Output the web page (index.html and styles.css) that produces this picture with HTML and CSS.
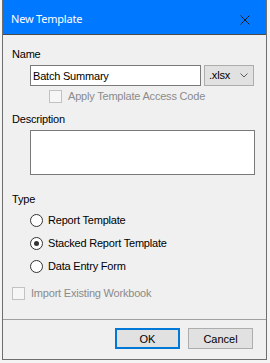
FILE: index.html
```html
<!DOCTYPE html>
<html lang="en">
<head>
  <meta charset="UTF-8">
  <title>New Template</title>
  <link rel="stylesheet" href="styles.css">
</head>
<body>

  <div class="window">
    <div class="titlebar">
      <span class="title">New Template</span>
      <svg class="close" width="10" height="10" viewBox="0 0 10 10">
        <path d="M0.5 0.5L9.5 9.5M9.5 0.5L0.5 9.5" stroke="#1e1e1e" stroke-width="1" fill="none"/>
      </svg>
    </div>

    <div class="content">
      <div class="label">Name</div>
      <div class="name-row">
        <input class="textbox" type="text" value="Batch Summary">
        <div class="combo">
          <span>.xlsx</span>
          <svg width="8" height="5" viewBox="0 0 8 5">
            <path d="M0.5 0.5L4 4L7.5 0.5" stroke="#5a5a5a" stroke-width="1" fill="none"/>
          </svg>
        </div>
      </div>
      <div class="check-row indent disabled">
        <span class="checkbox"></span>
        <span>Apply Template Access Code</span>
      </div>

      <div class="label desc-label">Description</div>
      <textarea class="memo"></textarea>

      <div class="label type-label">Type</div>
      <div class="radios">
        <div class="radio-row"><span class="radio"></span><span>Report Template</span></div>
        <div class="radio-row"><span class="radio checked"></span><span>Stacked Report Template</span></div>
        <div class="radio-row"><span class="radio"></span><span>Data Entry Form</span></div>
      </div>

      <div class="check-row import disabled">
        <span class="checkbox"></span>
        <span>Import Existing Workbook</span>
      </div>
    </div>

    <div class="footer">
      <button class="btn default">OK</button>
      <button class="btn">Cancel</button>
    </div>
  </div>

</body>
</html>
```

FILE: styles.css
```css
* {
  box-sizing: border-box;
}

body {
  margin: 0;
  background-color: #f4f4f4;
  color: #000;
  font-family: "Liberation Sans", Arial, sans-serif;
  font-size: 11px;
  letter-spacing: -0.2px;
}

.window {
  margin-left: 2px;
  width: 265px;
  height: 360px;
  border: 1px solid #6e6e6e;
  border-top: none;
  background-color: #f0f0f0;
  display: flex;
  flex-direction: column;
}

.titlebar {
  height: 35px;
  background-color: #0078ff;
  border-bottom: 1px solid #4a4a4a;
  display: flex;
  align-items: flex-start;
  padding: 11px 0 0 8px;
}

.title {
  flex: 1;
  font-family: "Noto Sans", sans-serif;
  font-size: 11px;
  line-height: 15px;
  color: #fff;
}

.close {
  margin: 4px 16px 0 0;
}

.content {
  flex: 1;
  padding: 13px 0 0 9px;
}

.label {
  line-height: 13px;
}

.name-row {
  display: flex;
  gap: 3px;
  margin: 4px 0 0 18px;
}

.textbox {
  width: 171px;
  height: 21px;
  margin: 0;
  padding: 0 0 0 2px;
  border: 1px solid #7a7a7a;
  background-color: #fff;
  font: inherit;
  letter-spacing: inherit;
  color: #000;
  outline: none;
}

.combo {
  width: 50px;
  height: 21px;
  border: 1px solid #adadad;
  background-color: #e1e1e1;
  display: flex;
  align-items: center;
  justify-content: space-between;
  padding: 0 5px 0 4px;
  line-height: 13px;
}

.check-row {
  display: flex;
  align-items: center;
  gap: 6px;
  line-height: 13px;
}

.check-row.indent {
  margin: 4px 0 0 37px;
}

.check-row.import {
  margin-top: 9px;
}

.checkbox {
  flex: none;
  width: 13px;
  height: 13px;
  border: 1px solid #c2c2c2;
  background-color: #f6f6f6;
}

.disabled {
  color: #8b8b8b;
}

.desc-label {
  margin-top: 10px;
}

.memo {
  display: block;
  width: 225px;
  height: 45px;
  margin: 4px 0 0 18px;
  padding: 0;
  border: 1px solid #7a7a7a;
  background-color: #fff;
  resize: none;
  outline: none;
}

.type-label {
  margin-top: 18px;
}

.radios {
  margin: 3px 0 0 18px;
}

.radio-row {
  height: 23px;
  display: flex;
  align-items: center;
  gap: 5px;
  line-height: 13px;
}

.radio {
  flex: none;
  width: 13px;
  height: 13px;
  border: 1px solid #333;
  border-radius: 50%;
  background-color: #fff;
  display: flex;
  align-items: center;
  justify-content: center;
}

.radio.checked::after {
  content: "";
  width: 5px;
  height: 5px;
  border-radius: 50%;
  background-color: #333;
}

.footer {
  height: 40px;
  border-top: 1px solid #a0a0a0;
  display: flex;
  justify-content: flex-end;
  gap: 8px;
  padding: 8px 13px 0 0;
}

.btn {
  width: 65px;
  height: 21px;
  margin: 0;
  padding: 0;
  border: 1px solid #adadad;
  background-color: #e1e1e1;
  color: #000;
  font: inherit;
  letter-spacing: 0;
}

.btn.default {
  border: 2px solid #0078d7;
}
```
